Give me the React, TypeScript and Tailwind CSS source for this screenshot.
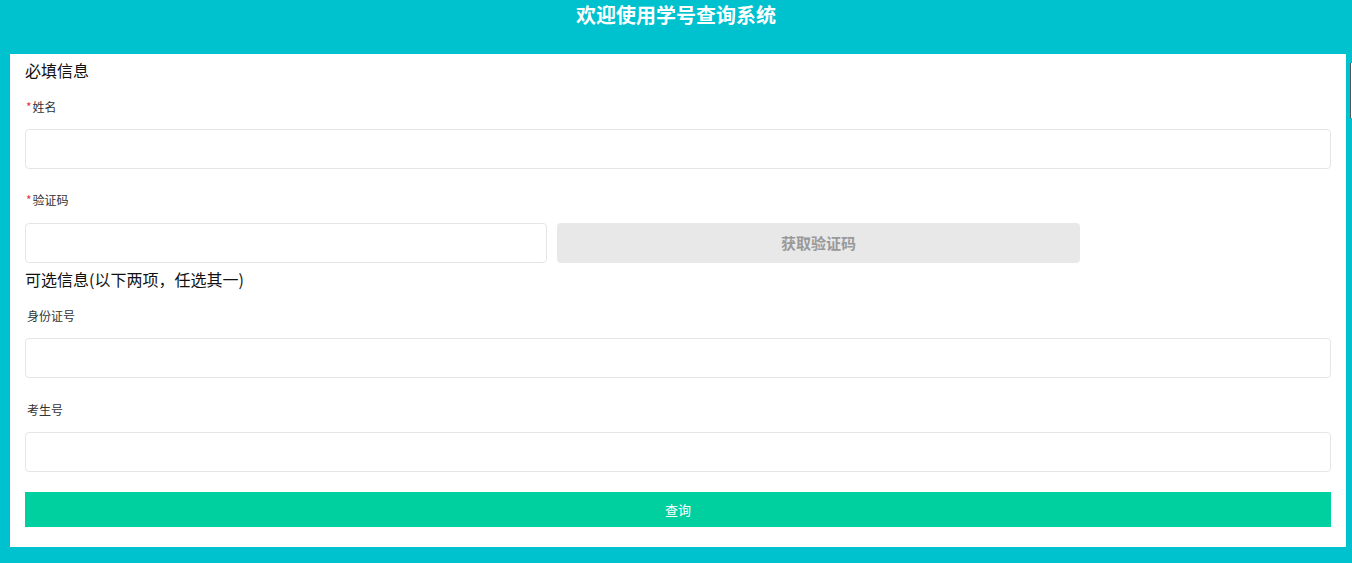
import React from "react";

const font = { fontFamily: '"Microsoft YaHei", "Noto Sans CJK SC", "Noto Sans", sans-serif' };

function Label({ text, required }: { text: string; required?: boolean }) {
  return (
    <div className={`h-[20px] leading-[20px] text-[12px] text-[#333] ${required ? "pl-[1px]" : "pl-[2px]"}`}>
      {required && <span className="text-[#e4393c] mr-[1px]">*</span>}
      {text}
    </div>
  );
}

function Input({ className = "" }: { className?: string }) {
  return (
    <input
      className={`h-[40px] border border-[#e6e6e6] rounded-[4px] bg-white outline-none px-3 text-[14px] ${className}`}
    />
  );
}

export default function App() {
  return (
    <div className="min-h-screen w-full bg-[#00c1ce] relative" style={font}>
      <div className="h-[54px] pt-[1px] text-center text-white font-bold text-[20px] leading-[28px]">
        欢迎使用学号查询系统
      </div>
      <div className="ml-[10px] w-[1336px] bg-white px-[15px] pt-[5px] pb-[20px]">
        <div className="text-[16px] leading-[22px] text-[#111]">必填信息</div>
        <div className="mt-[16px]">
          <Label text="姓名" required />
        </div>
        <Input className="mt-[12px] w-full block" />
        <div className="mt-[21px]">
          <Label text="验证码" required />
        </div>
        <div className="mt-[13px] flex gap-[10px]">
          <Input className="w-[40%]" />
          <button className="w-[40%] h-[40px] rounded-[4px] bg-[#e8e8e8] text-[#999] font-bold text-[15px]">
            获取验证码
          </button>
        </div>
        <div className="mt-[5px] text-[16px] leading-[22px] text-[#111]">可选信息(以下两项，任选其一)</div>
        <div className="mt-[16px]">
          <Label text="身份证号" />
        </div>
        <Input className="mt-[12px] w-full block" />
        <div className="mt-[22px]">
          <Label text="考生号" />
        </div>
        <Input className="mt-[12px] w-full block" />
        <button className="mt-[20px] block w-full h-[35px] bg-[#00d0a0] text-white text-[13px]">查询</button>
      </div>
      <div className="absolute right-0 top-[63px] w-[2px] h-[55px] border-l border-[#555] bg-white" />
    </div>
  );
}
